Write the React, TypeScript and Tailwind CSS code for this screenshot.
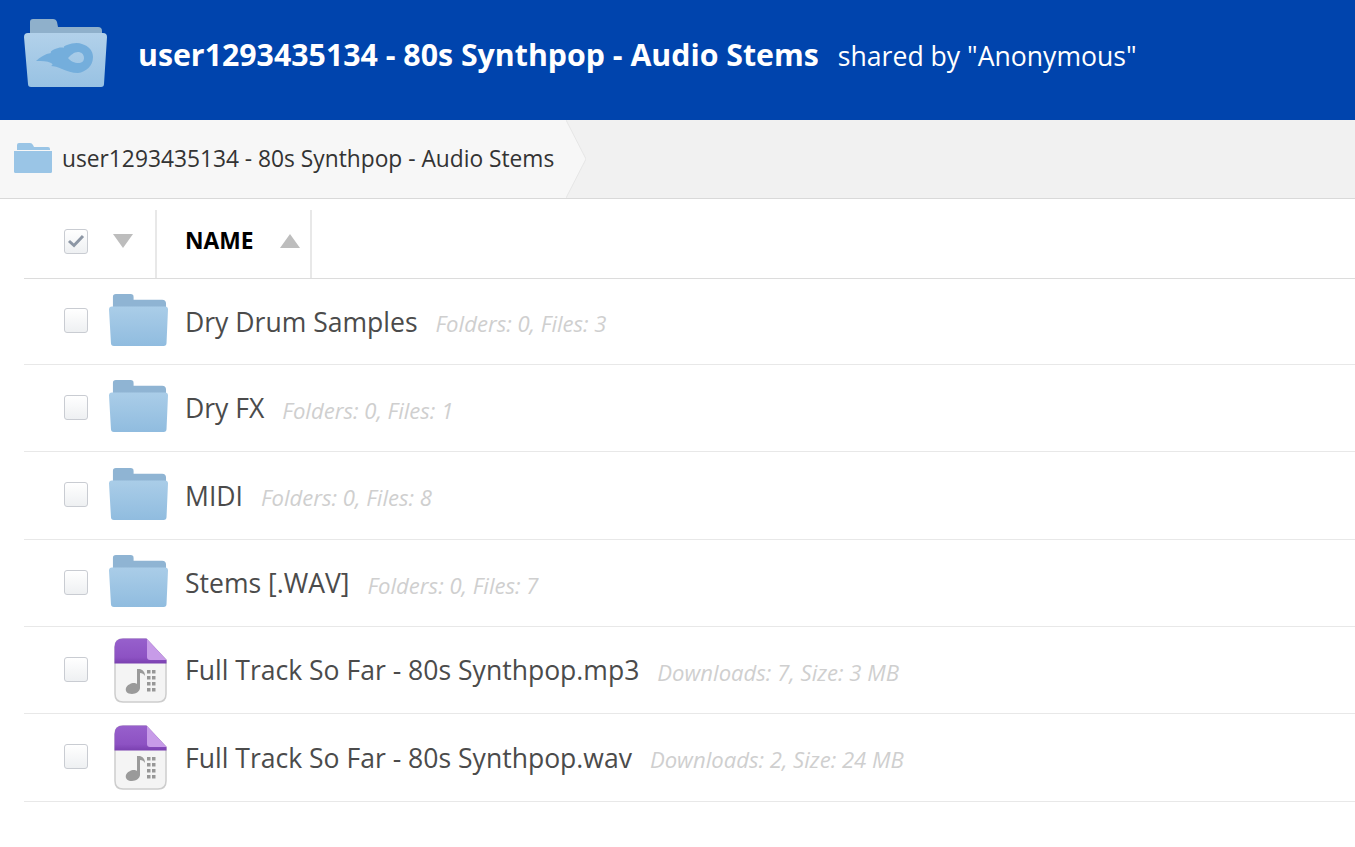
const rows = [
  { name: 'Dry Drum Samples', meta: 'Folders: 0, Files: 3', type: 'folder', h: 'h-[86px]' },
  { name: 'Dry FX', meta: 'Folders: 0, Files: 1', type: 'folder', h: 'h-[87px]' },
  { name: 'MIDI', meta: 'Folders: 0, Files: 8', type: 'folder', h: 'h-[88px]' },
  { name: 'Stems [.WAV]', meta: 'Folders: 0, Files: 7', type: 'folder', h: 'h-[87px]' },
  { name: 'Full Track So Far - 80s Synthpop.mp3', meta: 'Downloads: 7, Size: 3 MB', type: 'file', h: 'h-[87px]' },
  { name: 'Full Track So Far - 80s Synthpop.wav', meta: 'Downloads: 2, Size: 24 MB', type: 'file', h: 'h-[88px]' },
];

function FolderIcon({ className }: { className?: string }) {
  return (
    <svg className={className} viewBox="0 0 60 54" preserveAspectRatio="none">
      <defs>
        <linearGradient id="fold" x1="0" y1="0" x2="0" y2="1">
          <stop offset="0" stopColor="#aacde8" />
          <stop offset="1" stopColor="#90bcdf" />
        </linearGradient>
      </defs>
      <path d="M4 14V3q0-3 3-3h15q3 0 3 3v3h29q4 0 4 4v6H4z" fill="#8fb4d3" />
      <path d="M0 16q0-3 3-3h54q3 0 3 3l-1.500 35q0 3-3 3H5q-3 0-3-3z" fill="url(#fold)" />
    </svg>
  );
}

function CrumbFolder() {
  return (
    <svg className="w-[38px] h-[30px] shrink-0 mb-[3px]" viewBox="0 0 38 30">
      <path d="M3 7V2q0-2 2-2h11q2 0 3 2l1 2h14q2 0 2 2v1z" fill="#9ac5e6" />
      <path d="M0 8h38v20.500q0 1.500-1.500 1.500h-35Q0 30 0 28.500z" fill="#9ac5e6" />
    </svg>
  );
}

function LogoFolder() {
  return (
    <svg className="w-[84px] h-[69px] shrink-0" viewBox="0 0 84 69">
      <defs>
        <linearGradient id="big" x1="0" y1="0" x2="0" y2="1">
          <stop offset="0" stopColor="#b2d1ea" />
          <stop offset="1" stopColor="#98c2e3" />
        </linearGradient>
      </defs>
      <path d="M6 18V3q0-3 3-3h20q3 0 4 3l1 5h40q4 0 4 4v8H6z" fill="#8fb0cb" />
      <path d="M0 18q0-4 4-4h75q4 0 4 4l-3 47q0 3-3 3H7q-3 0-3-3z" fill="url(#big)" />
      <path
        d="M12 42c4-4 9-7 15-8-1-1 1-3 4-4 3-1 6-2 9-1-1-1 0-2 3-3 5-2 11-3 15-1 7 2 11 7 11 13 0 9-7 15-15 16-6 0-11-2-16-4-4-2-8-3-11-3 2-1 2-2 0-3-4-2-9-2-15-2zM44 39c2 3 7 5 10 5 4 0 6-2 6-5 0-4-3-6-6-6-4 0-7 3-10 6z"
        fill="#74aedc"
        fillRule="evenodd"
      />
    </svg>
  );
}

function AudioIcon() {
  return (
    <svg className="w-[53px] h-[65px] mt-1 ml-[5px]" viewBox="0 0 53 65">
      <defs>
        <linearGradient id="purple" x1="0" y1="0" x2="0" y2="1">
          <stop offset="0" stopColor="#9760cc" />
          <stop offset="0.75" stopColor="#8d52c3" />
          <stop offset="1" stopColor="#7a40b0" />
        </linearGradient>
      </defs>
      <path d="M1 9q0-8 8-8h23l20 21v34q0 8-8 8H9q-8 0-8-8z" fill="#f4f4f4" stroke="#cdcdcd" strokeWidth="1.500" />
      <path d="M0.500 25.500V9q0-8.500 8.500-8.500h23.500L52.500 22v3.500z" fill="url(#purple)" />
      <path d="M33 1l19.500 21H36q-3 0-3-3z" fill="#c79be8" />
      <path
        d="M23 31h3c3 1 5 3 5 7-1-2-3-3-5-3v15c0 3-4 6-8 6-5 0-7-3-6-6 1-3 5-5 8-5 1 0 2 0 3 1z"
        fill="#9a9a9a"
      />
      <path
        d="M33 32h3.500v3.500H33zM38 32h3.500v3.500H38zM33 38h3.500v3.500H33zM38 38h3.500v3.500H38zM33 44h3.500v3.500H33zM38 44h3.500v3.500H38zM33 50h3.500v3.500H33zM38 50h3.500v3.500H38z"
        fill="#979797"
      />
    </svg>
  );
}

function Checkbox({ checked, className }: { checked?: boolean; className?: string }) {
  return (
    <span className={`flex w-6 h-[25px] shrink-0 items-center justify-center rounded-[3px] border border-[#c9ccd2] bg-gradient-to-b from-white to-[#eef0f2] ${className ?? ''}`}>
      {checked && (
        <svg className="w-[18px] h-[14px]" viewBox="0 0 18 14">
          <path d="M2 7l5 4.500L16 2" fill="none" stroke="#8d97a5" strokeWidth="3" />
        </svg>
      )}
    </span>
  );
}

export default function App() {
  return (
    <div className="min-h-[847px] bg-white font-['Open_Sans',sans-serif] overflow-hidden">
      {/* Header */}
      <header className="flex items-center h-[120px] bg-[#0044ad] pl-6 pb-[14px] text-white">
        <LogoFolder />
        <div className="flex items-baseline mt-[3px] ml-[30px] whitespace-nowrap">
          <h1 className="text-[30.300px] font-bold">user1293435134 - 80s Synthpop - Audio Stems</h1>
          <span className="ml-[19px] text-[26.600px]">shared by "Anonymous"</span>
        </div>
      </header>

      {/* Breadcrumb */}
      <nav className="flex items-stretch h-[79px] bg-[#f1f1f1] border-b border-[#d9d9d9]">
        <div className="flex items-center bg-[#f7f7f7] pl-[14px] w-[566px]">
          <CrumbFolder />
          <span className="ml-[10px] text-[22.750px] text-[#333] whitespace-nowrap">user1293435134 - 80s Synthpop - Audio Stems</span>
        </div>
        <svg className="w-5 h-[78px] shrink-0" viewBox="0 0 20 78">
          <path d="M0 0l20 39L0 78z" fill="#f7f7f7" />
          <path d="M0 0l20 39L0 78" fill="none" stroke="#e6e6e6" />
        </svg>
      </nav>

      {/* File table */}
      <main className="ml-6">
        <div className="flex items-end h-[80px] border-b border-[#dcdcdc]">
          <div className="flex items-center h-[68px] pb-[6px] pl-10 w-[133px] border-r-2 border-[#e8e8e8]">
            <Checkbox checked />
            <svg className="ml-[25px] w-[20px] h-[14px]" viewBox="0 0 20 14">
              <path d="M0 0h20L10 14z" fill="#bdbdbd" />
            </svg>
          </div>
          <div className="flex items-center h-[68px] pb-[6px] pl-[28px] w-[155px] border-r-2 border-[#e8e8e8]">
            <span className="text-[22.800px] font-bold text-black">NAME</span>
            <svg className="ml-[26px] w-[20px] h-[14px]" viewBox="0 0 20 14">
              <path d="M10 0l10 14H0z" fill="#bdbdbd" />
            </svg>
          </div>
        </div>
        {rows.map((row) => (
          <div key={row.name} className={`flex items-center border-b border-[#e8e8e8] pl-10 ${row.h}`}>
            <Checkbox className="mb-[2px]" />
            <div className="flex justify-start w-[59px] ml-[21px] shrink-0 pb-1">
              {row.type === 'folder' ? <FolderIcon className="w-[59px] h-[52px] shrink-0" /> : <AudioIcon />}
            </div>
            <span className="ml-[17px] mt-[2px] text-[26.550px] text-[#4b4b4b] whitespace-nowrap">{row.name}</span>
            <span className="ml-[18px] mt-[5px] text-[22.100px] italic text-[#cfcfcf] whitespace-nowrap">{row.meta}</span>
          </div>
        ))}
      </main>
    </div>
  );
}
